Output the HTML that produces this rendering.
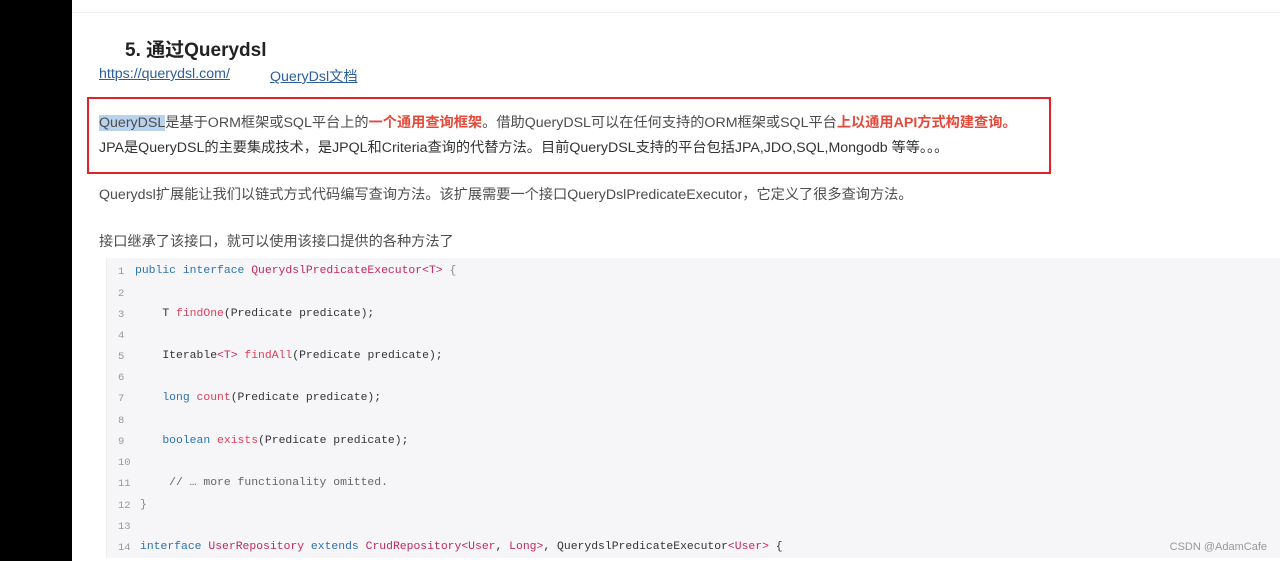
<!DOCTYPE html>
<html><head><meta charset="utf-8"><style>
*{margin:0;padding:0;box-sizing:border-box}
body{width:1280px;height:561px;overflow:hidden;background:#fff;position:relative;font-family:"Liberation Sans","Noto Sans CJK SC",sans-serif;color:#4d4d4d}
.black{position:absolute;left:0;top:0;width:72px;height:561px;background:#000}
.topbar{position:absolute;left:72px;top:0;right:0;height:13px;border-bottom:1px solid #f1eef4;background:#fff}
.t{position:absolute;white-space:nowrap}
h1{position:absolute;left:125px;top:35px;font-size:19px;font-weight:bold;color:#222}
a{color:#2a5e9c;text-decoration:underline;font-size:14.2px}
.box{position:absolute;left:87px;top:97px;width:964px;height:77px;border:2px solid #e4202b}
.red{color:#e4493a;font-weight:bold}
.p{font-size:14.2px;color:#4d4d4d}
.code{position:absolute;left:106px;top:258px;right:0;height:300px;background:#f6f6f8;border-left:1px solid #eee;font-family:"Liberation Mono",monospace;font-size:11.4px}
.ln{position:absolute;left:11px;color:#999;font-size:10.5px}
.c{position:absolute;left:28px;color:#333;white-space:pre}
.k{color:#2c72b0}.n{color:#c3285b}.f{color:#e0405a}.g{color:#888}
.wm{position:absolute;right:13px;top:541px;font-size:11px;color:#999}
</style></head><body>
<div class="black"></div>
<div class="topbar"></div>
<h1>5. 通过Querydsl</h1>
<a class="t" style="left:99px;top:66px">https://querydsl.com/</a>
<a class="t" style="left:270px;top:66px">QueryDsl文档</a>
<div class="box"></div>
<div class="t p" style="left:99px;top:112px"><span style="background:#b9d2ee">QueryDSL</span>是基于ORM框架或SQL平台上的<span class="red">一个通用查询框架</span>。借助QueryDSL可以在任何支持的ORM框架或SQL平台<span class="red">上以通用API方式构建查询。</span></div>
<div class="t p" style="left:99px;top:137px;color:#333">JPA是QueryDSL的主要集成技术，是JPQL和Criteria查询的代替方法。目前QueryDSL支持的平台包括JPA,JDO,SQL,Mongodb 等等。。。</div>
<div class="t p" style="left:99px;top:184px">Querydsl扩展能让我们以链式方式代码编写查询方法。该扩展需要一个接口QueryDslPredicateExecutor，它定义了很多查询方法。</div>
<div class="t p" style="left:99px;top:231px">接口继承了该接口，就可以使用该接口提供的各种方法了</div>
<div class="code">
<span class="ln" style="top:8px">1</span><span class="c" style="top:7px"><span class="k">public interface</span> <span class="n">QuerydslPredicateExecutor&lt;T&gt;</span> <span class="g">{</span></span>
<span class="ln" style="top:30px">2</span>
<span class="ln" style="top:51px">3</span><span class="c" style="top:50px">    T <span class="f">findOne</span>(Predicate predicate);</span>
<span class="ln" style="top:72px">4</span>
<span class="ln" style="top:93px">5</span><span class="c" style="top:92px">    Iterable<span class="n">&lt;T&gt;</span> <span class="f">findAll</span>(Predicate predicate);</span>
<span class="ln" style="top:114px">6</span>
<span class="ln" style="top:135px">7</span><span class="c" style="top:134px">    <span class="k">long</span> <span class="f">count</span>(Predicate predicate);</span>
<span class="ln" style="top:157px">8</span>
<span class="ln" style="top:178px">9</span><span class="c" style="top:177px">    <span class="k">boolean</span> <span class="f">exists</span>(Predicate predicate);</span>
<span class="ln" style="top:199px">10</span>
<span class="ln" style="top:220px">11</span><span class="c" style="top:219px;color:#666">     // … more functionality omitted.</span>
<span class="ln" style="top:242px">12</span><span class="c" style="top:241px;left:33px" ><span class="g">}</span></span>
<span class="ln" style="top:263px">13</span>
<span class="ln" style="top:284px">14</span><span class="c" style="top:283px;left:33px"><span class="k">interface</span> <span class="n">UserRepository</span> <span class="k">extends</span> <span class="n">CrudRepository&lt;User</span>, <span class="n">Long&gt;</span>, QuerydslPredicateExecutor<span class="n">&lt;User&gt;</span> {</span>
</div>
<div class="wm">CSDN @AdamCafe</div>
</body></html>
